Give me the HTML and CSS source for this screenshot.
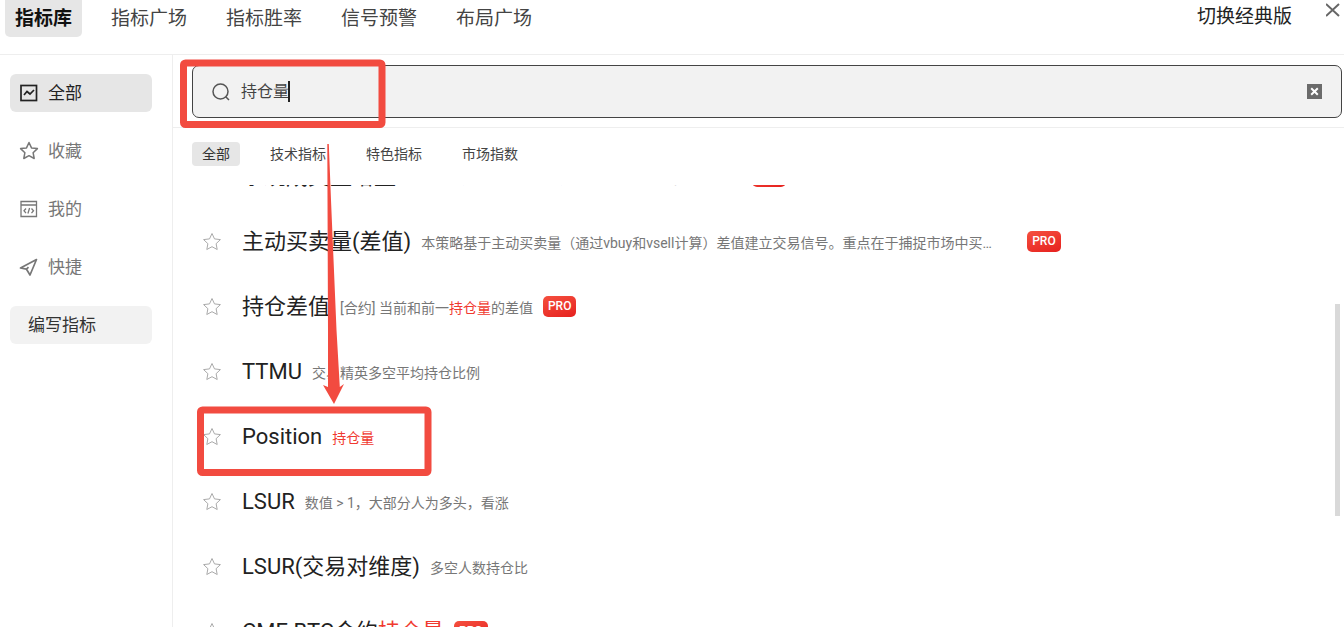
FILE: index.html
```html
<!DOCTYPE html>
<html lang="zh-CN">
<head>
  <meta charset="UTF-8">
  <meta name="viewport" content="width=device-width, initial-scale=1.0">
  <title>指标库</title>
  <link rel="stylesheet" href="styles.css">
</head>
<body>
  <svg class="symbols" aria-hidden="true">
    <symbol id="star" viewBox="0 0 20 20">
      <path d="M10 1.5l2.5 5.4 5.900.7-4.300 4.100 1.100 5.800L10 14.700l-5.200 2.800 1.100-5.800-4.300-4.100 5.900-.7z" fill="none" stroke="currentColor" stroke-linejoin="round"/>
    </symbol>
  </svg>

  <header class="topbar">
    <nav class="topnav">
      <a href="#" class="active">指标库</a>
      <a href="#">指标广场</a>
      <a href="#">指标胜率</a>
      <a href="#">信号预警</a>
      <a href="#">布局广场</a>
    </nav>
    <div class="top-actions">
      <a href="#">切换经典版</a>
      <button type="button" class="close" aria-label="关闭">
        <svg width="14" height="14" viewBox="0 0 14 14"><path d="M0 1l13 12M13 1L0 13" stroke="#666" stroke-width="2"/></svg>
      </button>
    </div>
  </header>

  <div class="layout">
    <aside class="sidebar">
      <a href="#" class="side-item active">
        <svg width="20" height="20" viewBox="0 0 20 20" fill="none" stroke="currentColor" stroke-width="1.7"><rect x="2" y="2.500" width="15.500" height="15"/><path d="M5 12l3-3.500 3 2.500 4-4"/></svg>
        全部
      </a>
      <a href="#" class="side-item">
        <svg width="20" height="20" stroke-width="1.500"><use href="#star"/></svg>
        收藏
      </a>
      <a href="#" class="side-item">
        <svg width="20" height="20" viewBox="0 0 20 20" fill="none" stroke="currentColor" stroke-width="1.300"><path d="M2 2.500h15.500v15H2zM2 6h15.500M7 9.500l-2 2.300 2 2.300M12.500 9.500l2 2.300-2 2.300M10.600 9l-1.700 5.500"/></svg>
        我的
      </a>
      <a href="#" class="side-item">
        <svg width="20" height="20" viewBox="0 0 20 20" fill="none" stroke="currentColor" stroke-width="1.700" stroke-linejoin="round"><path d="M17.500 2.500L1.500 11l6 1.200 3.500 5.800zM7.500 12.200l2-2"/></svg>
        快捷
      </a>
      <button type="button" class="write">编写指标</button>
    </aside>

    <main class="content">
      <div class="search-row">
        <div class="search">
          <svg width="20" height="20" viewBox="0 0 20 20" fill="none" stroke="#555" stroke-width="1.500"><circle cx="9.500" cy="9.500" r="7.500"/><path d="M14.700 14.700l3.300 3.300"/></svg>
          <div class="field">
            <input type="text" value="持仓量" aria-label="搜索指标">
            <span class="caret"></span>
          </div>
          <button type="button" class="clear" aria-label="清空">
            <svg width="15" height="15" viewBox="0 0 15 15"><path fill="#6b6b6b" d="M0 0h15v15H0z"/><path d="M4.200 4.200l6.600 6.600M10.800 4.200l-6.600 6.600" stroke="#fff" stroke-width="2"/></svg>
          </button>
        </div>
      </div>

      <div class="tabs">
        <button type="button" class="active">全部</button>
        <button type="button">技术指标</button>
        <button type="button">特色指标</button>
        <button type="button">市场指数</button>
      </div>

      <div class="scroller">
        <ul class="list">
          <li>
            <svg class="star"><use href="#star"/></svg>
            <span class="name">系统成交量增量</span>
            <span class="desc">当前主动成交和前一主动成交的增量差值变化情况统计</span>
            <span class="pro">PRO</span>
          </li>
          <li>
            <svg class="star"><use href="#star"/></svg>
            <span class="name">主动买卖量(差值)</span>
            <span class="desc long">本策略基于主动买卖量（通过vbuy和vsell计算）差值建立交易信号。重点在于捕捉市场中买…</span>
            <span class="pro">PRO</span>
          </li>
          <li>
            <svg class="star"><use href="#star"/></svg>
            <span class="name">持仓差值</span>
            <span class="desc">[合约] 当前和前一<em>持仓量</em>的差值</span>
            <span class="pro">PRO</span>
          </li>
          <li>
            <svg class="star"><use href="#star"/></svg>
            <span class="name">TTMU</span>
            <span class="desc">交易精英多空平均持仓比例</span>
          </li>
          <li>
            <svg class="star"><use href="#star"/></svg>
            <span class="name">Position</span>
            <span class="desc"><em>持仓量</em></span>
          </li>
          <li>
            <svg class="star"><use href="#star"/></svg>
            <span class="name">LSUR</span>
            <span class="desc">数值 &gt; 1，大部分人为多头，看涨</span>
          </li>
          <li>
            <svg class="star"><use href="#star"/></svg>
            <span class="name">LSUR(交易对维度)</span>
            <span class="desc">多空人数持仓比</span>
          </li>
          <li>
            <svg class="star"><use href="#star"/></svg>
            <span class="name">CME BTC合约<em>持仓量</em></span>
            <span class="pro">PRO</span>
          </li>
        </ul>
        <div class="thumb"></div>
      </div>
    </main>
  </div>

  <!-- highlight boxes and the arrow between them -->
  <svg class="marks" width="440" height="480" viewBox="0 0 440 480" aria-hidden="true">
    <g fill="none" stroke="#f24b40" stroke-width="7">
      <rect x="183.500" y="63" width="198.500" height="61.500" rx="2"/>
      <rect x="200.500" y="410" width="227.500" height="62.500" rx="2"/>
    </g>
    <path fill="#f24b40" d="M327.300 144h1.500L331 200l5.500 130 3.300 57 4.200-3-10 20-11-19 5 2V330z"/>
  </svg>
</body>
</html>
```

FILE: styles.css
```css
:root {
  --text: #222;
  --muted: #777;
  --line: #eee;
  --active-bg: #e6e6e6;
  --soft-bg: #f2f2f2;
  --red: #f03a30;
}

* {
  box-sizing: border-box;
}

body {
  margin: 0;
  height: 100vh;
  display: flex;
  flex-direction: column;
  overflow: hidden;
  position: relative;
  background: #fff;
  color: var(--text);
  font-family: Roboto, "Noto Sans CJK SC", sans-serif;
}

a {
  color: inherit;
  text-decoration: none;
}

button {
  border: none;
  padding: 0;
  background: none;
  color: inherit;
  font-family: inherit;
  cursor: pointer;
}

em {
  font-style: normal;
  color: var(--red);
}

svg {
  flex: none;
}

.symbols {
  position: absolute;
  width: 0;
  height: 0;
}

/* top bar */
.topbar {
  display: flex;
  justify-content: space-between;
  height: 55px;
  flex: none;
  border-bottom: 1px solid var(--line);
  font-size: 19px;
  line-height: 38px;
}

.topnav {
  display: flex;
  gap: 19px;
  padding-left: 5px;
}

.topnav a {
  height: 37px;
  padding: 0 10px;
  border-radius: 0 0 5px 5px;
  color: #444;
}

.topnav .active {
  background: var(--active-bg);
  color: #111;
  font-weight: bold;
}

.top-actions {
  display: flex;
  gap: 34px;
  line-height: 34px;
}

.close {
  height: 20px;
  display: flex;
  align-items: center;
  margin-right: 4px;
}

/* side menu */
.layout {
  display: flex;
  flex: 1;
  min-height: 0;
}

.sidebar {
  width: 173px;
  flex: none;
  display: flex;
  flex-direction: column;
  gap: 20px;
  padding: 19px 20px 0 10px;
  border-right: 1px solid var(--line);
}

.side-item,
.write {
  height: 38px;
  display: flex;
  align-items: center;
  gap: 9px;
  padding-left: 9px;
  border-radius: 6px;
  font-size: 17px;
  line-height: 20px;
  color: #777;
}

.side-item.active {
  background: var(--active-bg);
  color: var(--text);
}

.write {
  padding-left: 18px;
  background: var(--soft-bg);
  color: #333;
}

/* search */
.content {
  flex: 1;
  min-width: 0;
  display: flex;
  flex-direction: column;
}

.search-row {
  padding: 10px 2px 9px 19px;
  border-bottom: 1px solid var(--line);
}

.search {
  display: flex;
  align-items: center;
  gap: 10px;
  height: 53px;
  padding: 0 19px 0 18px;
  border: 1px solid #444;
  border-radius: 7px;
  background: var(--soft-bg);
}

.field {
  flex: 1;
  position: relative;
}

.field input {
  display: block;
  width: 100%;
  padding: 0;
  border: none;
  outline: none;
  background: none;
  color: #444;
  font-family: inherit;
  font-size: 16px;
  line-height: 24px;
}

.caret {
  position: absolute;
  left: 47px;
  top: 1px;
  width: 2px;
  height: 21px;
  background: #222;
}

.clear {
  display: flex;
}

.tabs {
  display: flex;
  gap: 20px;
  padding: 14px 19px 19px;
}

.tabs button {
  height: 24px;
  padding: 0 10px;
  border-radius: 4px;
  font-size: 14px;
  line-height: 20px;
  color: #444;
}

.tabs .active {
  background: var(--active-bg);
  color: #333;
}

/* indicator list */
.scroller {
  flex: 1;
  min-height: 0;
  overflow: hidden;
  position: relative;
}

.list {
  margin: -41px 0 0;
  padding: 0 20px 0 29px;
  list-style: none;
}

.list li {
  display: flex;
  align-items: center;
  gap: 10px;
  height: 65px;
  white-space: nowrap;
}

.star {
  width: 20px;
  height: 20px;
  margin-right: 10px;
  color: #aaa;
}

.name {
  font-size: 22px;
  line-height: 26px;
}

.desc {
  padding-top: 3px;
  font-size: 14px;
  line-height: 20px;
  color: var(--muted);
}

.desc.long {
  width: 596px;
}

.pro {
  padding: 0 5px;
  border-radius: 5px;
  background: linear-gradient(160deg, #f5503f, #e6211e);
  color: #fff;
  font-size: 12px;
  font-weight: 500;
  line-height: 21px;
}

.thumb {
  position: absolute;
  top: 119px;
  right: 4px;
  width: 5px;
  height: 212px;
  background: #d9d9d9;
}

.marks {
  position: absolute;
  left: 0;
  top: 0;
  pointer-events: none;
}
```
